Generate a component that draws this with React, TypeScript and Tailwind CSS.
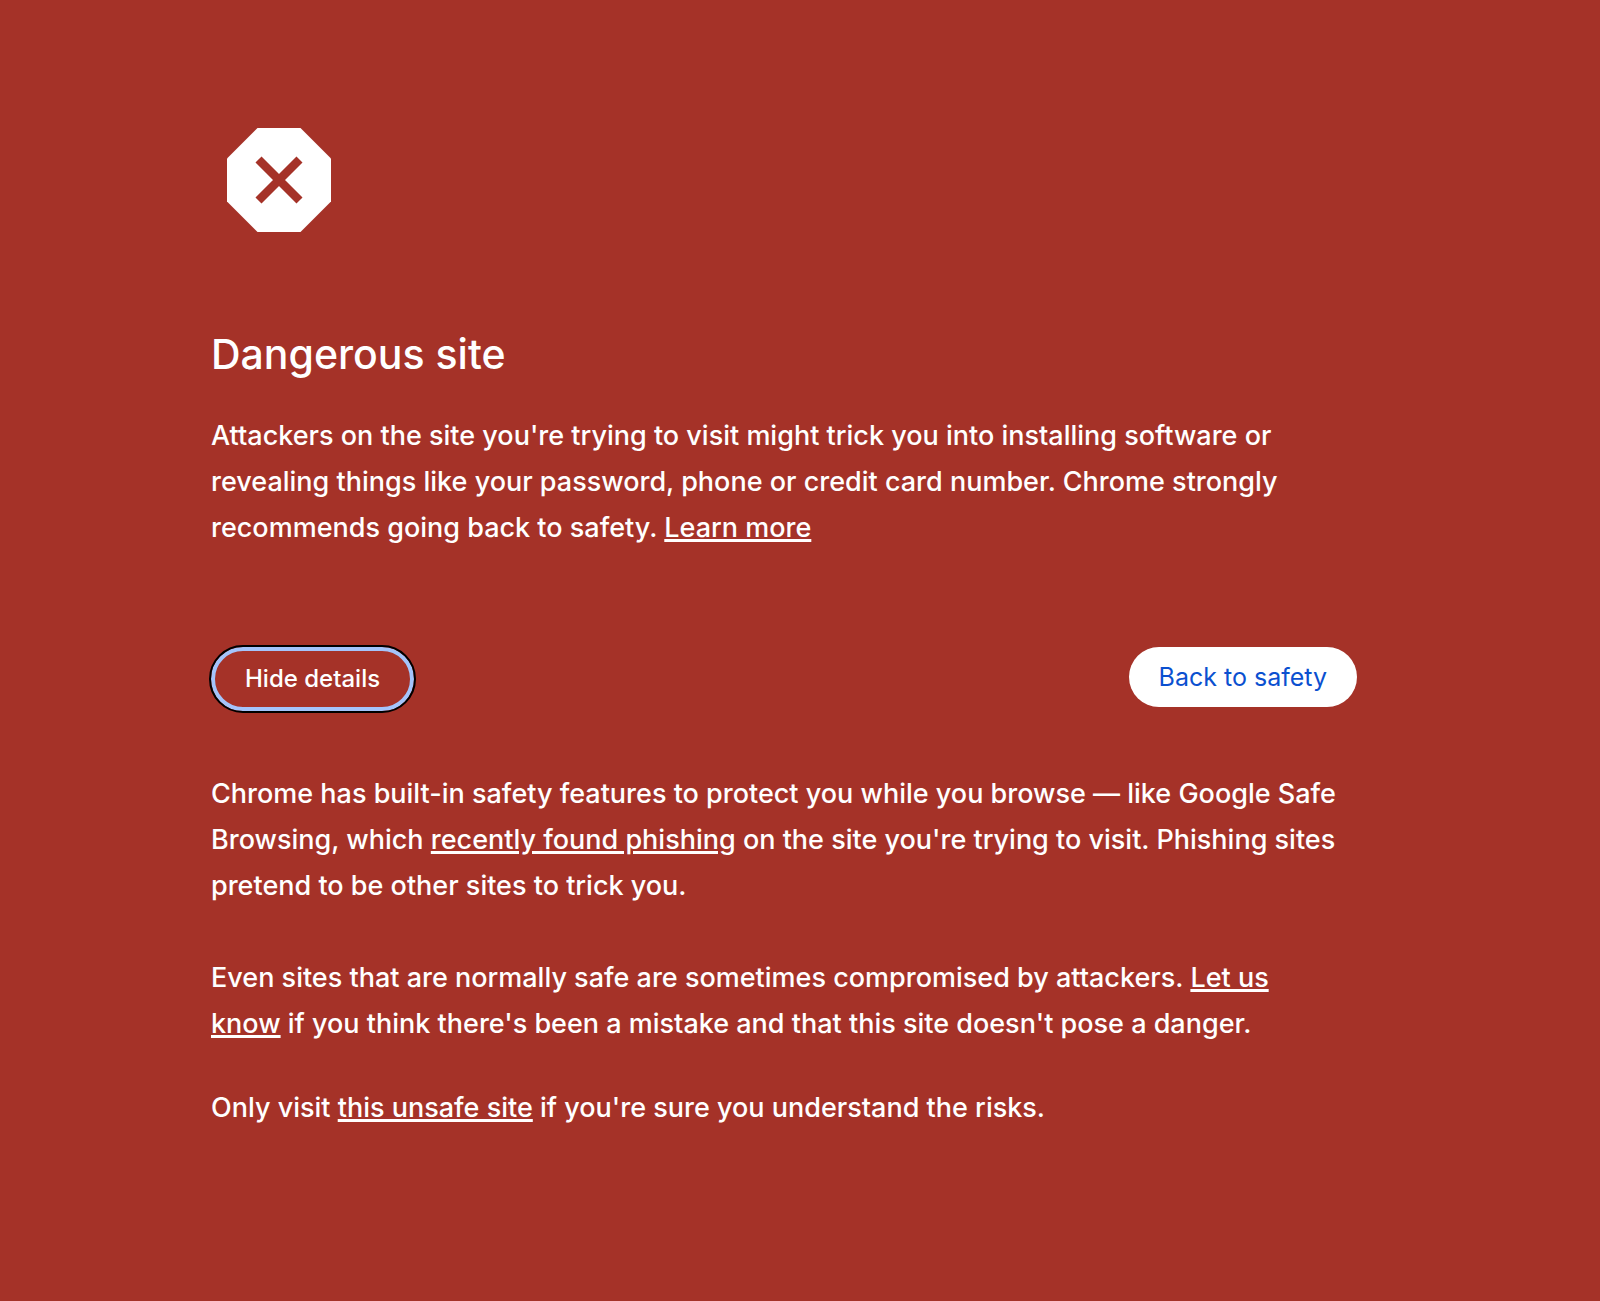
import React, { useState } from 'react';

const DangerIcon: React.FC<{ className?: string }> = ({ className }) => (
  <svg viewBox="0 0 104 104" fill="none" className={className} aria-hidden="true">
    <path d="M30.5 0H73.5L104 30.5V73.5L73.5 104H30.5L0 73.5V30.5Z" fill="white" />
    <path d="M31.5 31.5L72.5 72.5M72.5 31.5L31.5 72.5" stroke="#a53228" strokeWidth="8.5" />
  </svg>
);

const TextLink: React.FC<{ children: React.ReactNode }> = ({ children }) => (
  <a href="#" className="underline decoration-[3px] underline-offset-2">
    {children}
  </a>
);

const App: React.FC = () => {
  const [showDetails, setShowDetails] = useState(true);

  return (
    <div className="min-h-screen bg-[#a53228] pt-32 pr-14 pb-24 pl-6 font-['Inter',sans-serif] font-medium text-white">
      <main className="mx-auto w-full max-w-[1146px] text-[27px] leading-[46px]">
        <DangerIcon className="ml-4 h-26 w-26" />
        <h1 className="mt-24 text-[41px] leading-[53px]">Dangerous site</h1>
        <p className="mt-8">
          Attackers on the site you're trying to visit might trick you into installing software or
          revealing things like your password, phone or credit card number. Chrome strongly
          recommends going back to safety. <TextLink>Learn more</TextLink>
        </p>
        <div className="mt-24 flex items-start justify-between">
          <button
            type="button"
            onClick={() => setShowDetails(!showDetails)}
            className="h-16 rounded-full border-4 border-[#a4c4fb] px-[30px] text-2xl outline-2 outline-black"
          >
            {showDetails ? 'Hide details' : 'Details'}
          </button>
          <button
            type="button"
            className="h-15 rounded-full bg-white px-[30px] text-[25px] font-normal text-[#0b50d0]"
          >
            Back to safety
          </button>
        </div>
        {showDetails && (
          <section className="mt-15 pr-4">
            <p>
              Chrome has built-in safety features to protect you while you browse — like Google Safe
              Browsing, which <TextLink>recently found phishing</TextLink> on the site you're trying
              to visit. Phishing sites pretend to be other sites to trick you.
            </p>
            <p className="mt-[46px]">
              Even sites that are normally safe are sometimes compromised by attackers.{' '}
              <TextLink>Let us know</TextLink> if you think there's been a mistake and that this
              site doesn't pose a danger.
            </p>
            <p className="mt-[38px]">
              Only visit <TextLink>this unsafe site</TextLink> if you're sure you understand the
              risks.
            </p>
          </section>
        )}
      </main>
    </div>
  );
};

export default App;
